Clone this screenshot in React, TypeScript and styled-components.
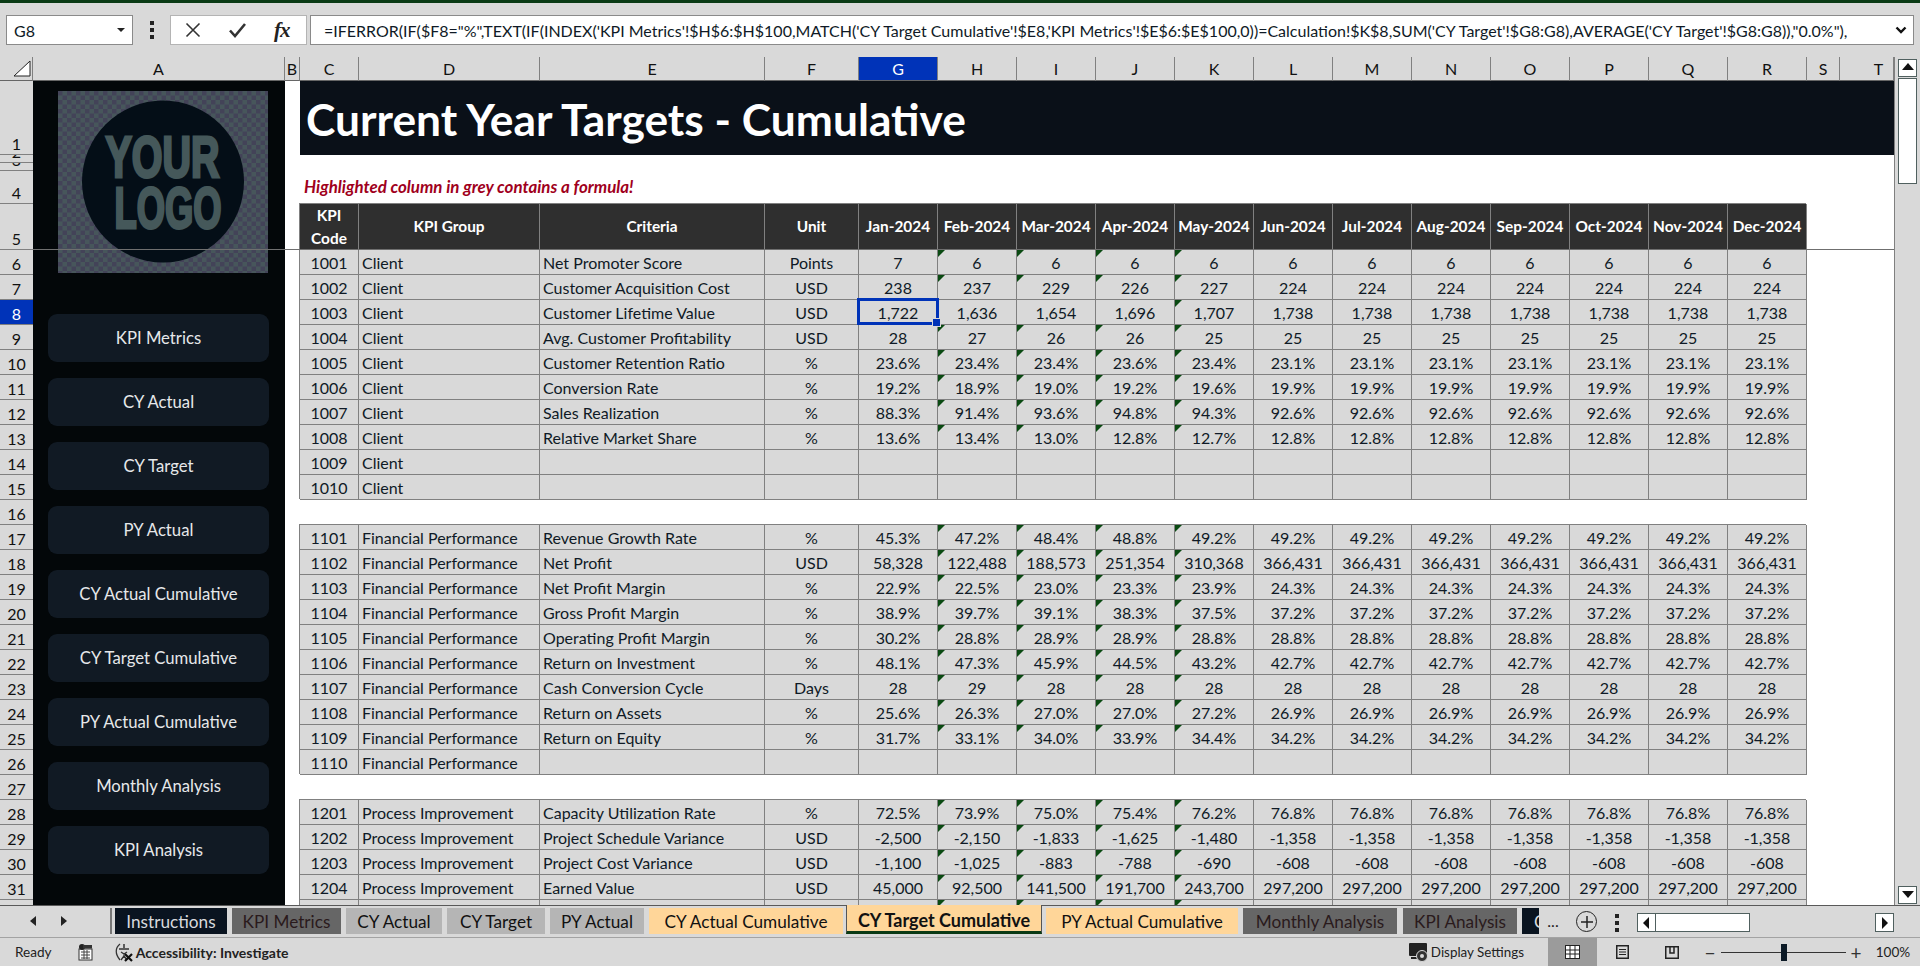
import { Fragment } from "react";
import styled, { createGlobalStyle, css } from "styled-components";

const GRID_LINE = "#808080";
const FONT = `Lato, "Liberation Sans", sans-serif`;
const SELECTED = "#0033b8";

const GlobalStyle = createGlobalStyle`
  html, body {
    margin: 0;
    padding: 0;
    height: 100%;
    overflow: hidden;
    background: #d9d9d9;
  }
  * {
    box-sizing: border-box;
  }
`;

const Page = styled.div`
  width: 1920px;
  height: 966px;
  display: flex;
  flex-direction: column;
  font-family: ${FONT};
  font-size: 16px;
  color: #0f1a26;
  background: #d9d9d9;
`;

const TitleStrip = styled.div`
  height: 3px;
  background: #0a3a14;
`;

const FormulaBar = styled.div`
  height: 54px;
  display: flex;
  align-items: flex-start;
  padding: 12px 6px 0;
`;

const NameBox = styled.div`
  width: 127px;
  height: 30px;
  background: #fff;
  border: 1px solid #8a8a8a;
  display: flex;
  align-items: center;
  justify-content: space-between;
  padding: 0 7px;
`;

const Caret = styled.span`
  width: 0;
  height: 0;
  border-left: 4px solid transparent;
  border-right: 4px solid transparent;
  border-top: 4px solid #222;
`;

const Dots = styled.div`
  display: flex;
  flex-direction: column;
  gap: 3px;
  align-items: center;
  justify-content: center;
  width: ${(p) => p.$width ?? "37px"};
  height: 30px;
  & > i {
    width: 4px;
    height: 4px;
    background: #222;
  }
`;

const FormulaButtons = styled.div`
  width: 137px;
  height: 30px;
  background: #fff;
  border: 1px solid #b4b4b4;
  display: flex;
  align-items: center;
  padding: 0 0 0 14px;
  gap: 28px;
`;

const FxLabel = styled.span`
  font-family: "Liberation Serif", serif;
  font-style: italic;
  font-weight: 700;
  font-size: 21px;
  letter-spacing: -1px;
  color: #222;
`;

const FormulaInput = styled.div`
  width: 1604px;
  height: 30px;
  margin-left: 3px;
  background: #fff;
  border: 1px solid #8a8a8a;
  display: flex;
  align-items: center;
  justify-content: space-between;
  padding: 0 6px 0 13px;
  white-space: nowrap;
  overflow: hidden;
`;

const Main = styled.div`
  height: 848px;
  display: flex;
`;

const Sheet = styled.div`
  width: 1894px;
  height: 848px;
  position: relative;
  overflow: hidden;
  display: grid;
  background: #fff;
  grid-template-columns: 33px 252px 15px 59px 181px 225px 94px repeat(12, 79px) 33px 54px;
  grid-template-rows: 24px 74px 8px 8px 33px 46px repeat(27, 25px);
`;

const Corner = styled.div`
  background: #d9d9d9;
  border-right: 1px solid ${GRID_LINE};
  border-bottom: 1px solid #666;
  display: flex;
  align-items: flex-end;
  justify-content: flex-end;
  padding: 0 1px 3px 0;
`;

const ColHead = styled.div`
  background: ${(p) => (p.$selected ? SELECTED : "#d9d9d9")};
  color: ${(p) => (p.$selected ? "#fff" : "#111")};
  border-right: 1px solid ${GRID_LINE};
  border-bottom: 1px solid #666;
  padding-left: ${(p) => p.$inset ?? 0}px;
  display: flex;
  align-items: center;
  justify-content: center;
`;

const RowHead = styled.div`
  grid-column: 1;
  background: ${(p) => (p.$selected ? SELECTED : "#d9d9d9")};
  color: ${(p) => (p.$selected ? "#fff" : "#111")};
  border-bottom: 1px solid ${GRID_LINE};
  display: flex;
  align-items: flex-end;
  justify-content: center;
  line-height: 21px;
  overflow: hidden;
`;

const Sidebar = styled.aside`
  grid-column: 2;
  grid-row: 2 / -1;
  background: #030709;
  padding: 10px 16px 0 15px;
  display: flex;
  flex-direction: column;
`;

const LogoArt = styled.svg`
  display: block;
  width: 210px;
  height: 182px;
  margin: 0 0 41px 10px;
  flex: none;
`;

const NavList = styled.nav`
  display: flex;
  flex-direction: column;
  gap: 16px;
`;

const NavButton = styled.div`
  height: 48px;
  border-radius: 9px;
  background: #111a24;
  color: #e6e8ea;
  font-size: 16.7px;
  display: flex;
  align-items: center;
  justify-content: center;
`;

const Gutter = styled.div`
  grid-column: 3;
  grid-row: 2 / -1;
  background: #fff;
`;

const Title = styled.div`
  grid-column: span 18;
  background: #0a1018;
  color: #fff;
  font-weight: 700;
  font-size: 44.3px;
  display: flex;
  align-items: center;
  padding-left: 6px;
  white-space: nowrap;
`;

const Blank = styled.div`
  grid-column: span ${(p) => p.$span ?? 18};
`;

const Note = styled.div`
  grid-column: span 18;
  color: #a0001c;
  font-style: italic;
  font-weight: 700;
  font-size: 16.9px;
  padding: 0 0 2px 4px;
  display: flex;
  align-items: center;
  white-space: nowrap;
`;

const HeadCell = styled.div`
  background: #2f2f2f;
  color: #fff;
  font-weight: 700;
  font-size: 15.4px;
  line-height: 23px;
  text-align: center;
  border-right: 1px solid ${GRID_LINE};
  border-bottom: 1px solid ${GRID_LINE};
  box-shadow: -1px -1px 0 0 ${GRID_LINE};
  display: flex;
  align-items: center;
  justify-content: center;
  white-space: nowrap;
`;

const Cell = styled.div`
  position: relative;
  background: #d9d9d9;
  border-right: 1px solid ${GRID_LINE};
  border-bottom: 1px solid ${GRID_LINE};
  box-shadow: -1px -1px 0 0 ${GRID_LINE};
  display: flex;
  align-items: center;
  justify-content: ${(p) => (p.$left ? "flex-start" : "center")};
  padding: 0 ${(p) => (p.$left ? "3px" : "0")};
  white-space: nowrap;
  ${(p) =>
    p.$flag &&
    css`
      &::before {
        content: "";
        position: absolute;
        top: 0;
        left: 0;
        width: 7px;
        height: 7px;
        background: #0a4a12;
        clip-path: polygon(0 0, 100% 0, 0 100%);
      }
    `}
`;

const Selection = styled.div`
  position: absolute;
  top: -2px;
  left: -2px;
  right: -2px;
  bottom: -1px;
  border: 3px solid ${SELECTED};
  z-index: 2;
  &::after {
    content: "";
    position: absolute;
    right: -5px;
    bottom: -5px;
    width: 7px;
    height: 7px;
    background: ${SELECTED};
    border: 1px solid #d9d9d9;
  }
`;

const FreezeLine = styled.div`
  position: absolute;
  left: 33px;
  right: 0;
  top: 192px;
  height: 1px;
  background: #6f6f6f;
  z-index: 3;
`;

const VScroll = styled.div`
  width: 26px;
  border-left: 1px solid #808080;
  padding: 2px 3px 1px 3px;
  display: flex;
  flex-direction: column;
`;

const ScrollButton = styled.div`
  flex: none;
  width: ${(p) => p.$width ?? "19px"};
  height: ${(p) => p.$height ?? "18px"};
  background: #fff;
  border: 1px solid #50605f;
  display: flex;
  align-items: center;
  justify-content: center;
`;

const ArrowIcon = styled.svg`
  display: block;
`;

const VThumb = styled.div`
  flex: none;
  height: 106px;
  margin-top: 1px;
  background: #fff;
  border: 1px solid #50605f;
`;

const Push = styled.div`
  flex: 1;
`;

const TabBar = styled.div`
  height: 33px;
  flex: none;
  border-top: 1px solid #595959;
  border-bottom: 1px solid #a3a3a3;
  display: flex;
  align-items: flex-start;
  padding-top: 2px;
`;

const TabNav = styled.div`
  width: 112px;
  height: 26px;
  border-right: 2px solid #777;
  margin-right: 3px;
  display: flex;
  align-items: center;
  padding-left: 29px;
  gap: 23px;
`;

const Tabs = styled.div`
  width: 1423px;
  display: flex;
  gap: 5px;
`;

const tabColors = {
  dark: css`
    background: #0a1420;
    color: #d8dade;
  `,
  grey: css`
    background: #666;
    color: #2a1a1c;
  `,
  light: css`
    background: #b5b5b5;
    color: #111;
  `,
  orange: css`
    background: #ffd699;
    color: #111;
  `,
};

const Tab = styled.div`
  ${(p) => tabColors[p.$kind]};
  flex: none;
  width: ${(p) => p.$width}px;
  margin-left: ${(p) => p.$shift ?? 0}px;
  height: 26px;
  font-size: 17.2px;
  display: flex;
  align-items: center;
  justify-content: ${(p) => (p.$clip ? "flex-start" : "center")};
  padding-left: ${(p) => (p.$clip ? "12px" : "0")};
  overflow: hidden;
  white-space: nowrap;
`;

const ActiveTab = styled(Tab)`
  font-weight: 700;
  font-size: 18px;
  height: 29px;
  margin-top: -3px;
  padding-top: 3px;
  border-left: 1px solid #555;
  border-right: 1px solid #555;
  border-bottom: 3px solid #0a3a14;
  position: relative;
`;

const Ellipsis = styled.span`
  width: 30px;
  text-align: center;
  line-height: 26px;
  color: #222;
`;

const AddSheet = styled.div`
  width: 21px;
  height: 21px;
  border-radius: 50%;
  border: 1.5px solid #222;
  margin: 3px 0 0 8px;
  display: flex;
  align-items: center;
  justify-content: center;
`;

const HScroll = styled.div`
  display: flex;
  margin-top: 5px;
  height: 19px;
`;

const HThumb = styled.div`
  width: 94px;
  height: 19px;
  background: #fff;
  border: 1px solid #50605f;
  border-left: 0;
`;

const HTrack = styled.div`
  width: 125px;
`;

const StatusBar = styled.footer`
  flex: 1;
  display: flex;
  align-items: center;
  font-size: 13.6px;
  color: #222;
  padding-left: 15px;
`;

const StatusIcon = styled.svg`
  display: block;
  flex: none;
  margin-left: ${(p) => p.$gap ?? 0}px;
`;

const StatusBold = styled.span`
  font-weight: 700;
  font-size: 14px;
  margin-left: 3px;
`;

const StatusRight = styled.div`
  margin-left: auto;
  height: 100%;
  display: flex;
  align-items: center;
  padding-right: 2px;
`;

const DisplayLabel = styled.span`
  font-size: 13.4px;
  margin: 0 24px 0 2px;
`;

const ViewButton = styled.div`
  width: ${(p) => (p.$active ? 49 : 50)}px;
  height: 100%;
  background: ${(p) => (p.$active ? "#9b9b9b" : "transparent")};
  display: flex;
  align-items: center;
  justify-content: center;
`;

const ZoomSlider = styled.div`
  position: relative;
  width: 125px;
  height: 1px;
  background: #333;
  margin: 0 4px 0 5px;
  &::after {
    content: "";
    position: absolute;
    left: 60px;
    top: -8px;
    width: 6px;
    height: 17px;
    background: #0c1a26;
  }
`;

const ZoomSign = styled.span`
  width: 12px;
  margin-left: ${(p) => p.$gap ?? 0}px;
  text-align: center;
  font-size: 19px;
  line-height: 1;
  color: #333;
`;

const ZoomValue = styled.span`
  width: 50px;
  text-align: center;
  margin-left: 6px;
`;

const COLUMNS = ["C", "D", "E", "F", "G", "H", "I", "J", "K", "L", "M", "N", "O", "P", "Q", "R", "S", "T"];
const MONTHS = ["Jan", "Feb", "Mar", "Apr", "May", "Jun", "Jul", "Aug", "Sep", "Oct", "Nov", "Dec"];
const NAV = [
  "KPI Metrics",
  "CY Actual",
  "CY Target",
  "PY Actual",
  "CY Actual Cumulative",
  "CY Target Cumulative",
  "PY Actual Cumulative",
  "Monthly Analysis",
  "KPI Analysis",
];
const FORMULA = `=IFERROR(IF($F8="%",TEXT(IF(INDEX('KPI Metrics'!$H$6:$H$100,MATCH('CY Target Cumulative'!$E8,'KPI Metrics'!$E$6:$E$100,0))=Calculation!$K$8,SUM('CY Target'!$G8:G8),AVERAGE('CY Target'!$G8:G8)),"0.0%"),`;

type Row = { code: string; group: string; name?: string; unit?: string; values?: string[] };

// the last value repeats through to December
const row = (code: number, group: string, name?: string, unit?: string, values?: string[]): Row => ({
  code: String(code),
  group,
  name,
  unit,
  values: values && [...values, ...Array(12 - values.length).fill(values[values.length - 1])],
});

const pct = (...v: number[]) => v.map((n) => `${n.toFixed(1)}%`);

const C = "Client";
const F = "Financial Performance";
const P = "Process Improvement";

const GROUPS: Row[][] = [
  [
    row(1001, C, "Net Promoter Score", "Points", ["7", "6"]),
    row(1002, C, "Customer Acquisition Cost", "USD", ["238", "237", "229", "226", "227", "224"]),
    row(1003, C, "Customer Lifetime Value", "USD", ["1,722", "1,636", "1,654", "1,696", "1,707", "1,738"]),
    row(1004, C, "Avg. Customer Profitability", "USD", ["28", "27", "26", "26", "25"]),
    row(1005, C, "Customer Retention Ratio", "%", pct(23.6, 23.4, 23.4, 23.6, 23.4, 23.1)),
    row(1006, C, "Conversion Rate", "%", pct(19.2, 18.9, 19.0, 19.2, 19.6, 19.9)),
    row(1007, C, "Sales Realization", "%", pct(88.3, 91.4, 93.6, 94.8, 94.3, 92.6)),
    row(1008, C, "Relative Market Share", "%", pct(13.6, 13.4, 13.0, 12.8, 12.7, 12.8)),
    row(1009, C),
    row(1010, C),
  ],
  [
    row(1101, F, "Revenue Growth Rate", "%", pct(45.3, 47.2, 48.4, 48.8, 49.2)),
    row(1102, F, "Net Profit", "USD", ["58,328", "122,488", "188,573", "251,354", "310,368", "366,431"]),
    row(1103, F, "Net Profit Margin", "%", pct(22.9, 22.5, 23.0, 23.3, 23.9, 24.3)),
    row(1104, F, "Gross Profit Margin", "%", pct(38.9, 39.7, 39.1, 38.3, 37.5, 37.2)),
    row(1105, F, "Operating Profit Margin", "%", pct(30.2, 28.8, 28.9, 28.9, 28.8)),
    row(1106, F, "Return on Investment", "%", pct(48.1, 47.3, 45.9, 44.5, 43.2, 42.7)),
    row(1107, F, "Cash Conversion Cycle", "Days", ["28", "29", "28"]),
    row(1108, F, "Return on Assets", "%", pct(25.6, 26.3, 27.0, 27.0, 27.2, 26.9)),
    row(1109, F, "Return on Equity", "%", pct(31.7, 33.1, 34.0, 33.9, 34.4, 34.2)),
    row(1110, F),
  ],
  [
    row(1201, P, "Capacity Utilization Rate", "%", pct(72.5, 73.9, 75.0, 75.4, 76.2, 76.8)),
    row(1202, P, "Project Schedule Variance", "USD", ["-2,500", "-2,150", "-1,833", "-1,625", "-1,480", "-1,358"]),
    row(1203, P, "Project Cost Variance", "USD", ["-1,100", "-1,025", "-883", "-788", "-690", "-608"]),
    row(1204, P, "Earned Value", "USD", ["45,000", "92,500", "141,500", "191,700", "243,700", "297,200"]),
    { code: "", group: "" },
  ],
];

const TABS = [
  { label: "Instructions", kind: "dark", width: 112 },
  { label: "KPI Metrics", kind: "grey", width: 109 },
  { label: "CY Actual", kind: "light", width: 96 },
  { label: "CY Target", kind: "light", width: 98 },
  { label: "PY Actual", kind: "light", width: 94 },
  { label: "CY Actual Cumulative", kind: "orange", width: 194 },
  { label: "CY Target Cumulative", kind: "orange", width: 196, shift: -2, active: true },
  { label: "PY Actual Cumulative", kind: "orange", width: 192, shift: -1 },
  { label: "Monthly Analysis", kind: "grey", width: 154 },
  { label: "KPI Analysis", kind: "grey", width: 114, shift: 1 },
  { label: "C", kind: "dark", width: 17, clip: true },
];

function Logo() {
  return (
    <LogoArt viewBox="0 0 210 182">
      <defs>
        <pattern id="checker" width="9" height="9" patternUnits="userSpaceOnUse">
          <rect width="9" height="9" fill="#47565b" />
          <rect width="4.5" height="4.5" fill="#434358" />
          <rect x="4.5" y="4.5" width="4.5" height="4.5" fill="#434358" />
        </pattern>
      </defs>
      <rect width="210" height="182" fill="url(#checker)" />
      <circle cx="105" cy="90.5" r="81" fill="#040e17" />
      <g fontFamily="Liberation Sans, sans-serif" fontWeight="700" fill="#45585a" stroke="#45585a" strokeWidth="3" fontSize="57">
        <text x="47.5" y="85.5" textLength="114" lengthAdjust="spacingAndGlyphs">YOUR</text>
        <text x="56.5" y="137" textLength="107" lengthAdjust="spacingAndGlyphs">LOGO</text>
      </g>
    </LogoArt>
  );
}

function RowCells({ data, number }: { data: Row; number: number }) {
  return (
    <>
      <RowHead $selected={number === 8}>{number}</RowHead>
      <Cell>{data.code}</Cell>
      <Cell $left>{data.group}</Cell>
      <Cell $left>{data.name}</Cell>
      <Cell>{data.unit}</Cell>
      {MONTHS.map((month, i) => {
        const flagged =
          (data.values || !data.code) && i >= 1 && i <= 4 && !(data.code === "1003" && i < 4);
        return (
          <Cell key={month} $flag={flagged}>
            {data.values?.[i]}
            {number === 8 && i === 0 && <Selection />}
          </Cell>
        );
      })}
      <Blank $span={2} />
    </>
  );
}

function SheetRows() {
  let number = 6;
  return (
    <>
      {GROUPS.map((group, g) => (
        <Fragment key={g}>
          {group.map((data) => {
            const current = number++;
            return <RowCells key={current} data={data} number={current} />;
          })}
          {g < GROUPS.length - 1 && (
            <>
              <RowHead>{number++}</RowHead>
              <Blank />
            </>
          )}
        </Fragment>
      ))}
    </>
  );
}

function Triangle({ dir }: { dir: "up" | "down" | "left" | "right" }) {
  const shapes = {
    up: "0,8 6,1 12,8",
    down: "0,2 6,9 12,2",
    left: "8,0 8,12 2,6",
    right: "3,0 3,12 9,6",
  };
  return (
    <ArrowIcon width="12" height="12" viewBox="0 0 12 12">
      <polygon points={shapes[dir]} fill="#111" />
    </ArrowIcon>
  );
}

export default function App() {
  return (
    <Page>
      <GlobalStyle />
      <TitleStrip />
      <FormulaBar>
        <NameBox>
          G8
          <Caret />
        </NameBox>
        <Dots>
          <i />
          <i />
          <i />
        </Dots>
        <FormulaButtons>
          <svg width="16" height="16" viewBox="0 0 16 16">
            <path d="M1.5 1.5 14.5 14.5M14.5 1.5 1.5 14.5" stroke="#333" strokeWidth="1.6" fill="none" />
          </svg>
          <svg width="17" height="16" viewBox="0 0 17 16">
            <path d="M1 8.5 6 14 16 2" stroke="#333" strokeWidth="2.6" fill="none" />
          </svg>
          <FxLabel>fx</FxLabel>
        </FormulaButtons>
        <FormulaInput>
          {FORMULA}
          <svg width="12" height="8" viewBox="0 0 12 8">
            <path d="M1.5 1.5 6 6l4.5-4.5" stroke="#111" strokeWidth="2.4" fill="none" />
          </svg>
        </FormulaInput>
      </FormulaBar>
      <Main>
        <Sheet>
          <Corner>
            <svg width="18" height="17" viewBox="0 0 18 17">
              <polygon points="17,1 17,16 1,16" fill="#fff" stroke="#222" strokeWidth="1" />
            </svg>
          </Corner>
          <ColHead>A</ColHead>
          <ColHead>B</ColHead>
          {COLUMNS.map((c) => (
            <ColHead key={c} $selected={c === "G"} $inset={c === "T" ? 24 : 0}>
              {c}
            </ColHead>
          ))}
          <Sidebar>
            <Logo />
            <NavList>
              {NAV.map((label) => (
                <NavButton key={label}>{label}</NavButton>
              ))}
            </NavList>
          </Sidebar>
          <Gutter />
          <RowHead>1</RowHead>
          <Title>Current Year Targets - Cumulative</Title>
          <RowHead>2</RowHead>
          <Blank />
          <RowHead>3</RowHead>
          <Blank />
          <RowHead>4</RowHead>
          <Note>Highlighted column in grey contains a formula!</Note>
          <RowHead>5</RowHead>
          <HeadCell>
            KPI
            <br />
            Code
          </HeadCell>
          <HeadCell>KPI Group</HeadCell>
          <HeadCell>Criteria</HeadCell>
          <HeadCell>Unit</HeadCell>
          {MONTHS.map((m) => (
            <HeadCell key={m}>{m}-2024</HeadCell>
          ))}
          <Blank $span={2} />
          <SheetRows />
          <FreezeLine />
        </Sheet>
        <VScroll>
          <ScrollButton>
            <Triangle dir="up" />
          </ScrollButton>
          <VThumb />
          <Push />
          <ScrollButton>
            <Triangle dir="down" />
          </ScrollButton>
        </VScroll>
      </Main>
      <TabBar>
        <TabNav>
          <svg width="8" height="12" viewBox="0 0 8 12">
            <polygon points="7,1 7,11 1,6" fill="#222" />
          </svg>
          <svg width="8" height="12" viewBox="0 0 8 12">
            <polygon points="1,1 1,11 7,6" fill="#222" />
          </svg>
        </TabNav>
        <Tabs>
          {TABS.map((t) => {
            const Item = t.active ? ActiveTab : Tab;
            return (
              <Item key={t.label} $kind={t.kind} $width={t.width} $shift={t.shift} $clip={t.clip}>
                {t.label}
              </Item>
            );
          })}
        </Tabs>
        <Ellipsis>...</Ellipsis>
        <AddSheet>
          <svg width="12" height="12" viewBox="0 0 12 12">
            <path d="M6 0v12M0 6h12" stroke="#222" strokeWidth="1.5" />
          </svg>
        </AddSheet>
        <Dots $width="40px">
          <i />
          <i />
          <i />
        </Dots>
        <HScroll>
          <ScrollButton $height="19px">
            <Triangle dir="left" />
          </ScrollButton>
          <HThumb />
          <HTrack />
          <ScrollButton $height="19px">
            <Triangle dir="right" />
          </ScrollButton>
        </HScroll>
      </TabBar>
      <StatusBar>
        Ready
        <StatusIcon $gap={26} width="15" height="17" viewBox="0 0 15 17">
          <rect x="1" y="5" width="13" height="11" fill="#fff" stroke="#333" />
          <path d="M3 8h9M3 11h9M3 14h9M6 6v9M9 6v9" stroke="#444" strokeWidth="1" />
          <circle cx="4" cy="3" r="3" fill="#222" />
          <rect x="5" y="1" width="9" height="3.5" fill="#333" />
        </StatusIcon>
        <StatusIcon $gap={20} width="20" height="20" viewBox="0 0 20 20">
          <path d="M7 2C2 6 2 12 7 18" stroke="#333" strokeWidth="1.3" fill="none" />
          <path d="M6 7h10M11 2v4" stroke="#333" strokeWidth="1.5" fill="none" />
          <path d="M8 10l3 2 3-2M11 12v2l-3 4M11 14l3 4" stroke="#333" strokeWidth="1.3" fill="none" />
          <path d="M12 12l7 7M19 12l-7 7" stroke="#111" strokeWidth="2.2" />
        </StatusIcon>
        <StatusBold>Accessibility: Investigate</StatusBold>
        <StatusRight>
          <StatusIcon width="20" height="20" viewBox="0 0 20 20">
            <rect x="0" y="1" width="18" height="13" rx="1" fill="#222" />
            <rect x="2" y="15" width="6" height="2" fill="#222" />
            <circle cx="13" cy="14" r="5.5" fill="#333" stroke="#d9d9d9" />
            <circle cx="13" cy="14" r="2" fill="#d9d9d9" />
          </StatusIcon>
          <DisplayLabel>Display Settings</DisplayLabel>
          <ViewButton $active>
            <svg width="15" height="14" viewBox="0 0 15 14">
              <rect x="0.5" y="0.5" width="14" height="13" fill="#fff" stroke="#222" />
              <path d="M0 5h15M0 9h15M5 0v14M10 0v14" stroke="#222" />
            </svg>
          </ViewButton>
          <ViewButton>
            <svg width="13" height="14" viewBox="0 0 13 14">
              <rect x="0.75" y="0.75" width="11.5" height="12.5" fill="none" stroke="#222" strokeWidth="1.5" />
              <path d="M3 4.5h7M3 7h7M3 9.5h7" stroke="#222" />
            </svg>
          </ViewButton>
          <ViewButton>
            <svg width="14" height="13" viewBox="0 0 14 13">
              <rect x="0.75" y="0.75" width="12.5" height="11.5" fill="none" stroke="#222" strokeWidth="1.5" />
              <path d="M5 1v6h4V1" stroke="#222" strokeWidth="1.5" fill="none" />
            </svg>
          </ViewButton>
          <ZoomSign $gap={7}>−</ZoomSign>
          <ZoomSlider />
          <ZoomSign>+</ZoomSign>
          <ZoomValue>100%</ZoomValue>
        </StatusRight>
      </StatusBar>
    </Page>
  );
}
